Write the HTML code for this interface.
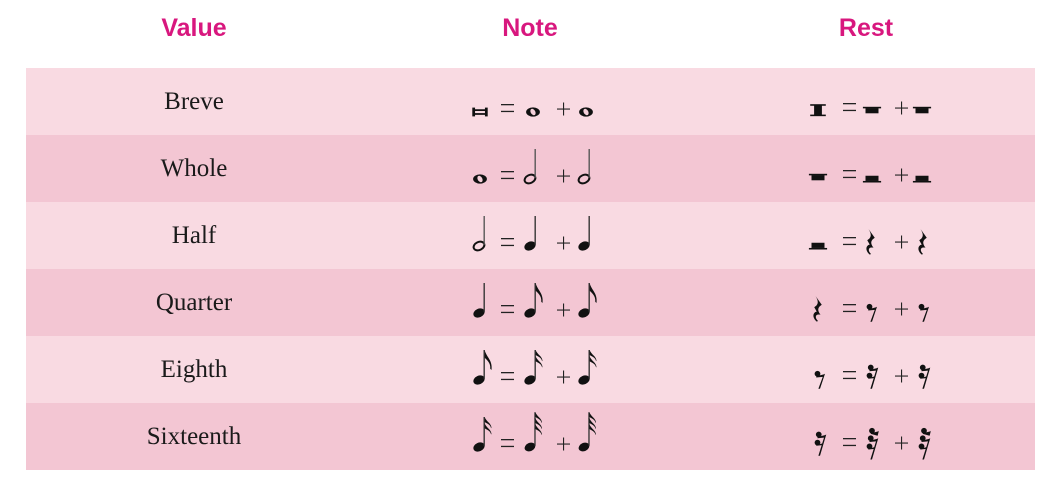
<!DOCTYPE html>
<html><head><meta charset="utf-8"><style>
body{margin:0;background:#fff;width:1055px;height:497px;overflow:hidden;position:relative;font-family:"Liberation Serif",serif}
.h{position:absolute;top:14px;font:bold 25px "Liberation Sans",sans-serif;color:#d8177e;transform:translateX(-50%)}
.row{position:absolute;left:26px;width:1009px;height:67px}
.l{background:#f9dae2}.d{background:#f3c6d3}
.v{position:absolute;font-size:25px;color:#1a1a1a;transform:translateX(-50%);left:194px}
svg{position:absolute;left:0;top:0}
</style></head><body>
<div class="h" style="left:194px">Value</div>
<div class="h" style="left:530px">Note</div>
<div class="h" style="left:866px">Rest</div>
<div class="row l" style="top:68px"></div>
<div class="row d" style="top:135px"></div>
<div class="row l" style="top:202px"></div>
<div class="row d" style="top:269px"></div>
<div class="row l" style="top:336px"></div>
<div class="row d" style="top:403px"></div>
<div class="v" style="top:88px">Breve</div>
<div class="v" style="top:155px">Whole</div>
<div class="v" style="top:222px">Half</div>
<div class="v" style="top:289px">Quarter</div>
<div class="v" style="top:356px">Eighth</div>
<div class="v" style="top:423px">Sixteenth</div>
<svg width="1055" height="497" viewBox="0 0 1055 497">
<defs>
<g id="eq"><rect x="0" y="-8" width="13" height="1.3" fill="#222"/><rect x="0" y="-1.2" width="13" height="1.3" fill="#222"/></g>
<g id="pl"><rect x="0" y="-3.5" width="13" height="1.1" fill="#222"/><rect x="6" y="-9.5" width="1.1" height="13" fill="#222"/></g>
<g id="wh"><ellipse cx="0" cy="0" rx="6" ry="4" fill="#111"/><ellipse cx="0" cy="0" rx="2" ry="3" fill="#f5d0da" transform="rotate(-30)"/></g>
<g id="br"><rect x="-7" y="-4" width="2.5" height="8" fill="#111"/><rect x="4.5" y="-4" width="2.5" height="8" fill="#111"/><rect x="-5" y="-2.5" width="10" height="1.6" fill="#111"/><rect x="-5" y="1" width="10" height="1.6" fill="#111"/></g>
<g id="hf"><ellipse cx="0" cy="0" rx="4.5" ry="3.2" fill="none" stroke="#111" stroke-width="1.6" transform="rotate(-25)"/><rect x="3.6" y="-24" width="1.1" height="23" fill="#555"/></g>
<g id="qt"><ellipse cx="0" cy="0" rx="4.7" ry="3.4" fill="#111" transform="rotate(-25)"/><rect x="3.6" y="-24" width="1.1" height="23" fill="#333"/></g>
<path id="f1" d="M4.5,-24 C6,-18 11,-16 10,-8 L9,-9 C9.5,-14 6,-16 4.5,-18Z" fill="#111"/>
<path id="fs" d="M4.5,-24 C6,-20 10,-19 10,-15 L9.5,-15.5 C9,-18 6,-19 4.5,-20Z" fill="#111"/>
<g id="e8"><use href="#qt"/><use href="#f1"/></g>
<g id="s16"><use href="#qt"/><use href="#fs"/><use href="#fs" y="5"/></g>
<g id="t32"><use href="#qt"/><rect x="3.6" y="-29" width="1.1" height="6" fill="#333"/><use href="#fs" y="-5"/><use href="#fs"/><use href="#fs" y="5"/></g>
<g id="rbr"><rect x="-6" y="-6" width="12" height="1.2" fill="#111"/><rect x="-6" y="2" width="12" height="1.2" fill="#111"/><rect x="-3" y="-5" width="6" height="7.5" fill="#111"/></g>
<g id="rwh"><rect x="-7" y="-4" width="14" height="1.2" fill="#111"/><rect x="-5" y="-3" width="10" height="4" fill="#111"/></g>
<g id="rhf"><rect x="-7" y="1.5" width="14" height="1.2" fill="#111"/><rect x="-5" y="-2.5" width="10" height="4" fill="#111"/></g>
<path id="rq" d="M-2,-12 L3,-5 C0,-3 -1,-1 2,3 C-2,2 -3,5 0,8 L-1,8.5 C-5,5 -4,1 -1,0.5 L-3,-3 C0,-5 1,-7 -2,-12Z" fill="#111"/>
<g id="r8"><circle cx="-2" cy="-5" r="2.3" fill="#111"/><path d="M-3,-3 L3,-4.5 L4,-5 L0,7 L-1.3,7 L2.2,-2.5 L-3,-2Z" fill="#111"/></g>
<g id="r16"><circle cx="-1" cy="-10" r="2.3" fill="#111"/><path d="M-2,-8 L4,-9.5 L5,-10 L0,7 L-1.3,7 L3.2,-7.5 L-2,-7Z" fill="#111"/><circle cx="-2" cy="-3.5" r="2.3" fill="#111"/><path d="M-3,-1.5 L2.5,-3 L2,-1.5 L-3,-1Z" fill="#111"/></g>
<g id="r32"><use href="#r16" y="3"/><circle cx="0" cy="-13" r="2.3" fill="#111"/><path d="M-1,-11 L5,-12.5 L5.5,-13 L4.5,-9 L-1,-10.5Z" fill="#111"/></g>
</defs>
<g transform="translate(0,112)"><use href="#br" transform="translate(480,0) scale(1.1)"/><use href="#eq" x="501"/><use href="#wh" transform="translate(533,0) scale(1.15)"/><use href="#pl" x="557"/><use href="#wh" transform="translate(586,0) scale(1.15)"/></g>
<g transform="translate(0,179)"><use href="#wh" transform="translate(480,0) scale(1.15)"/><use href="#eq" x="501"/><use href="#hf" transform="translate(530,0) scale(1.25)"/><use href="#pl" x="557"/><use href="#hf" transform="translate(584,0) scale(1.25)"/></g>
<g transform="translate(0,246)"><use href="#hf" transform="translate(479,0) scale(1.25)"/><use href="#eq" x="501"/><use href="#qt" transform="translate(530,0) scale(1.25)"/><use href="#pl" x="557"/><use href="#qt" transform="translate(584,0) scale(1.25)"/></g>
<g transform="translate(0,313)"><use href="#qt" transform="translate(479,0) scale(1.25)"/><use href="#eq" x="501"/><use href="#e8" transform="translate(530,0) scale(1.25)"/><use href="#pl" x="557"/><use href="#e8" transform="translate(584,0) scale(1.25)"/></g>
<g transform="translate(0,380)"><use href="#e8" transform="translate(479,0) scale(1.25)"/><use href="#eq" x="501"/><use href="#s16" transform="translate(530,0) scale(1.25)"/><use href="#pl" x="557"/><use href="#s16" transform="translate(584,0) scale(1.25)"/></g>
<g transform="translate(0,447)"><use href="#s16" transform="translate(479,0) scale(1.25)"/><use href="#eq" x="501"/><use href="#t32" transform="translate(530,0) scale(1.2)"/><use href="#pl" x="557"/><use href="#t32" transform="translate(584,0) scale(1.2)"/></g>
<g transform="translate(0,112)"><use href="#rbr" transform="translate(818,0) scale(1.3)"/><use href="#eq" x="843" y="-1"/><use href="#rwh" transform="translate(872,0) scale(1.3)"/><use href="#pl" x="895" y="-1"/><use href="#rwh" transform="translate(922,0) scale(1.3)"/></g>
<g transform="translate(0,179)"><use href="#rwh" transform="translate(818,0) scale(1.3)"/><use href="#eq" x="843" y="-1"/><use href="#rhf" transform="translate(872,0) scale(1.3)"/><use href="#pl" x="895" y="-1"/><use href="#rhf" transform="translate(922,0) scale(1.3)"/></g>
<g transform="translate(0,246)"><use href="#rhf" transform="translate(818,0) scale(1.3)"/><use href="#eq" x="843" y="-1"/><use href="#rq" transform="translate(871,-2) scale(1.25)"/><use href="#pl" x="895" y="-1"/><use href="#rq" transform="translate(923,-2) scale(1.25)"/></g>
<g transform="translate(0,313)"><use href="#rq" transform="translate(818,-2) scale(1.25)"/><use href="#eq" x="843" y="-1"/><use href="#r8" transform="translate(872,0) scale(1.25)"/><use href="#pl" x="895" y="-1"/><use href="#r8" transform="translate(924,0) scale(1.25)"/></g>
<g transform="translate(0,380)"><use href="#r8" transform="translate(820,0) scale(1.25)"/><use href="#eq" x="843" y="-1"/><use href="#r16" transform="translate(872,0) scale(1.25)"/><use href="#pl" x="895" y="-1"/><use href="#r16" transform="translate(924,0) scale(1.25)"/></g>
<g transform="translate(0,447)"><use href="#r16" transform="translate(820,0) scale(1.25)"/><use href="#eq" x="843" y="-1"/><use href="#r32" transform="translate(872,0) scale(1.25)"/><use href="#pl" x="895" y="-1"/><use href="#r32" transform="translate(924,0) scale(1.25)"/></g>
</svg>
</body></html>
